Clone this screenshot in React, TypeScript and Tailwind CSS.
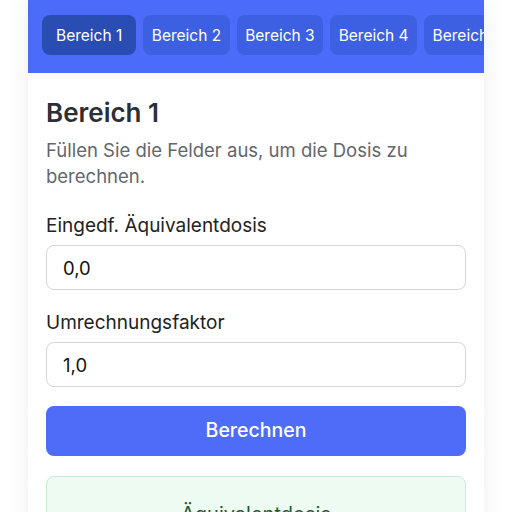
import { useState } from 'react';

const tabs = ['Bereich 1', 'Bereich 2', 'Bereich 3', 'Bereich 4', 'Bereich 5', 'Bereich 6'];

export default function App() {
  const [active, setActive] = useState(0);
  const [dose, setDose] = useState('0,0');
  const [factor, setFactor] = useState('1,0');

  return (
    <div className="min-h-screen bg-white font-['Inter',sans-serif]">
      <div className="mx-auto w-[456px] bg-white shadow-[0_0_24px_rgba(0,0,0,0.07)]">
        <div className="h-[73px] bg-[#4a6cf8] pt-[15px] pl-[14px] overflow-hidden">
          <div className="flex gap-[7px]">
            {tabs.map((t, i) => (
              <button
                key={t}
                onClick={() => setActive(i)}
                className={
                  i === active
                    ? 'h-10 shrink-0 rounded-lg bg-[#2a4db3] px-[14px] pt-px text-[15.5px] text-white'
                    : 'h-10 shrink-0 rounded-lg bg-[#3d60e2] px-[8.5px] pt-px text-[15.5px] text-white'
                }
              >
                {t}
              </button>
            ))}
          </div>
        </div>

        <div className="px-[18px] pt-[24px] pb-6">
          <h1 className="text-[26px] font-semibold leading-8 text-[#2b2f36]">Bereich {active + 1}</h1>
          <p className="mt-2 text-[18.5px] leading-[26px] text-[#62666d]">
            Füllen Sie die Felder aus, um die Dosis zu berechnen.
          </p>

          <label className="mt-[23px] block text-[19px] leading-[27px] text-[#222]">Eingedf. Äquivalentdosis</label>
          <input
            value={dose}
            onChange={e => setDose(e.target.value)}
            className="mt-[6px] h-[45px] w-full rounded-lg border border-[#d6d6d6] px-4 text-[18.5px] text-[#111] outline-none"
          />

          <label className="mt-[19px] block text-[19px] leading-[27px] text-[#222]">Umrechnungsfaktor</label>
          <input
            value={factor}
            onChange={e => setFactor(e.target.value)}
            className="mt-[6px] h-[45px] w-full rounded-lg border border-[#d6d6d6] px-4 text-[18.5px] text-[#111] outline-none"
          />

          <button className="mt-[19px] h-[50px] w-full rounded-lg bg-[#4e6cf7] text-[19.5px] font-medium text-white">
            Berechnen
          </button>

          <div className="mt-5 rounded-lg border border-[#c9ecd5] bg-[#edfbf2] px-4 pt-[22px] pb-6 text-center">
            <div className="text-[20px] text-[#1f5a33]">Äquivalentdosis</div>
            <div className="mt-2 text-[28px] font-semibold text-[#1f5a33]">0,0 mSv</div>
          </div>
        </div>
      </div>
    </div>
  );
}
